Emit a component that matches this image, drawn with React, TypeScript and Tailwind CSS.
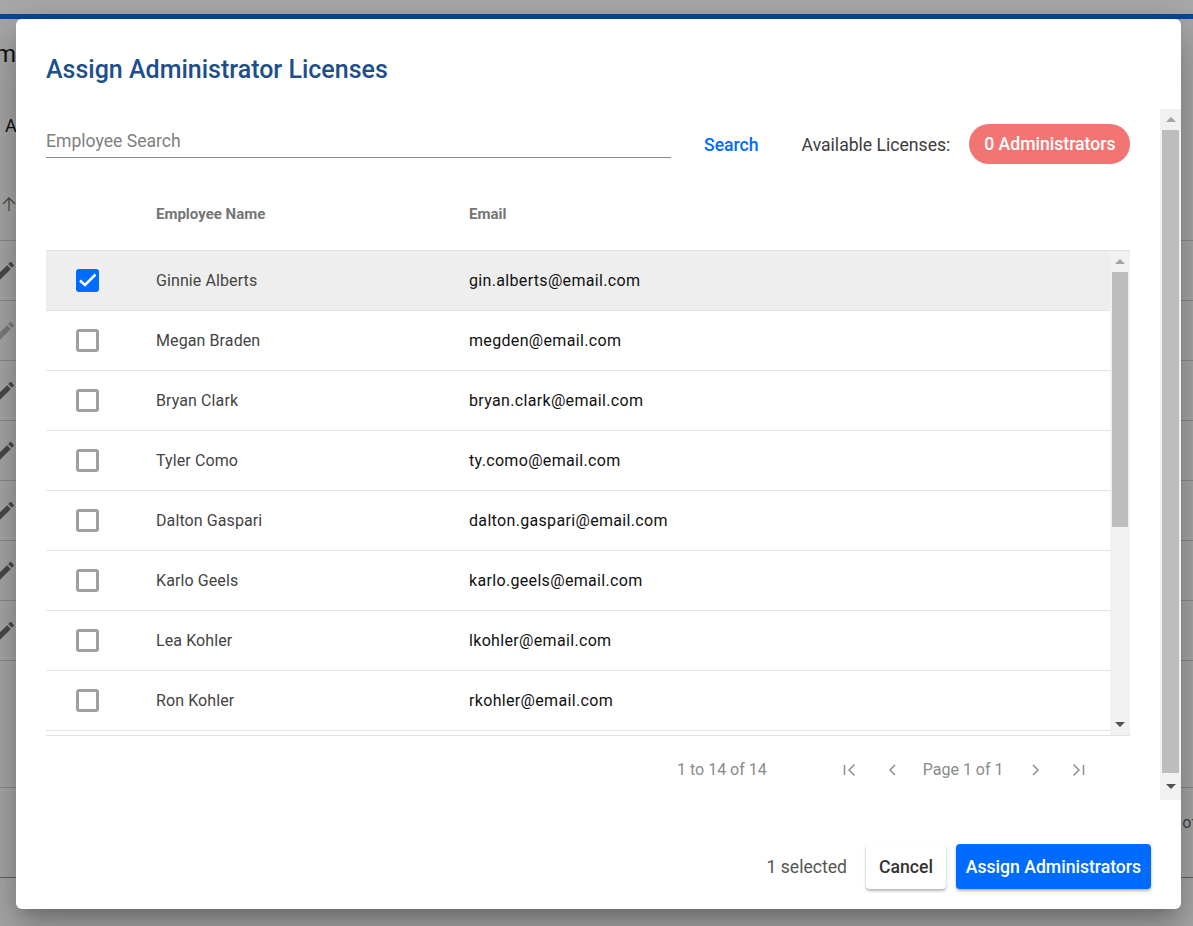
const employees = [
  { name: "Ginnie Alberts", email: "gin.alberts@email.com", checked: true },
  { name: "Megan Braden", email: "megden@email.com" },
  { name: "Bryan Clark", email: "bryan.clark@email.com" },
  { name: "Tyler Como", email: "ty.como@email.com" },
  { name: "Dalton Gaspari", email: "dalton.gaspari@email.com" },
  { name: "Karlo Geels", email: "karlo.geels@email.com" },
  { name: "Lea Kohler", email: "lkohler@email.com" },
  { name: "Ron Kohler", email: "rkohler@email.com" },
];

function Pencil({ faded }: { faded?: boolean }) {
  return (
    <svg viewBox="0 0 24 24" className={`ml-[-7px] h-6 w-6 ${faded ? "fill-[#7d7d7d]" : "fill-[#4a4a4a]"}`}>
      <path d="M3 17.25V21h3.75L17.81 9.94l-3.75-3.75L3 17.25zM20.71 7.04c.39-.39.39-1.02 0-1.41l-2.34-2.34c-.39-.39-1.02-.39-1.41 0l-1.83 1.83 3.75 3.75 1.83-1.83z" />
    </svg>
  );
}

function Checkbox({ checked }: { checked?: boolean }) {
  if (checked) {
    return (
      <div className="flex h-[23px] w-[23px] items-center justify-center rounded-[3px] bg-[#006cff]">
        <svg viewBox="0 0 23 23" className="h-[23px] w-[23px] fill-none stroke-white stroke-[2.5]">
          <path d="M4 11.5l5 4.5L19.5 5.5" />
        </svg>
      </div>
    );
  }
  return <div className="h-[23px] w-[23px] rounded-[3px] border-[3px] border-[#a0a0a0] bg-white" />;
}

function ScrollArrow({ down, dark }: { down?: boolean; dark?: boolean }) {
  return (
    <svg viewBox="0 0 10 5" className={`h-[5px] w-[10px] ${dark ? "fill-[#505050]" : "fill-[#a3a3a3]"}`}>
      <path d={down ? "M0 0h10L5 5z" : "M0 5h10L5 0z"} />
    </svg>
  );
}

function PageIcon({ d }: { d: string }) {
  return (
    <svg viewBox="0 0 16 16" className="h-4 w-4 fill-none stroke-[#8f8f8f] stroke-[1.5]">
      <path d={d} />
    </svg>
  );
}

export default function App() {
  return (
    <div className="relative h-[926px] w-[1193px] overflow-hidden bg-[#a8a8a8] font-['Roboto',sans-serif]">
      {/* page behind the dialog */}
      <div className="flex h-full flex-col">
        <div className="h-[14px] shrink-0" />
        <div className="h-[5px] shrink-0 bg-[#0047a0]" />
        <div className="h-[222px] shrink-0 border-b border-[#8c8c8c]">
          <div className="ml-[-5px] mt-[19px] text-[24px] leading-8 text-[#111]">m</div>
          <div className="ml-[5px] mt-[44px] text-[18px] leading-6 text-[#111]">A</div>
          <svg viewBox="0 0 16 16" className="ml-[1px] mt-[58px] h-4 w-4 fill-none stroke-[#4f4f3f] stroke-[1.3]">
            <path d="M8 15V2M2 8l6-6 6 6" />
          </svg>
        </div>
        {[0, 1, 2, 3, 4, 5, 6].map((i) => (
          <div key={i} className="flex h-[60px] shrink-0 items-center border-b border-[#8c8c8c]">
            <Pencil faded={i === 1} />
          </div>
        ))}
        <div className="h-[127px] shrink-0 border-b border-[#8c8c8c]" />
        <div className="flex h-[90px] shrink-0 items-start justify-end border-b border-[#666] pt-[25px]">
          <span className="mr-[-4px] text-[16px] leading-5 text-[#444]">of</span>
        </div>
      </div>

      {/* dialog */}
      <div className="absolute left-4 top-[19px] flex h-[890px] w-[1165px] flex-col rounded-[6px] bg-white shadow-[0_11px_15px_-7px_rgba(0,0,0,0.2),0_24px_38px_3px_rgba(0,0,0,0.14),0_9px_46px_8px_rgba(0,0,0,0.12)]">
        <div className="h-[90px] shrink-0 pl-[30px] pt-[33px] text-[25px] font-medium leading-[36px] text-[#1c4f8b]">
          Assign Administrator Licenses
        </div>

        <div className="flex h-[691px] shrink-0">
          <div className="w-[1144px] shrink-0 pl-[30px] pr-[30px]">
            {/* search row */}
            <div className="flex h-[62px] items-center whitespace-nowrap pt-[8px] text-[17.6px]">
              <div className="mt-[-7px] flex h-[34px] w-[625px] shrink-0 items-center border-b border-[#8c8c8c] text-[#808080]">
                <span className="mt-[3px]">Employee Search</span>
              </div>
              <span className="ml-[33px] mt-[2px] font-medium text-[#006cff]">Search</span>
              <span className="ml-[43px] mt-[2px] text-[#3c3c3c]">Available Licenses:</span>
              <span className="ml-[19px] flex h-10 w-[161px] shrink-0 items-center justify-center rounded-full bg-[#f27573] pt-[1px] font-medium text-white">
                0 Administrators
              </span>
            </div>

            {/* grid */}
            <div className="flex h-[80px] items-center border-b border-[#e2e2e2] pt-[8px] text-[15px] font-bold text-[#757575]">
              <span className="ml-[110px] w-[313px]">Employee Name</span>
              <span>Email</span>
            </div>
            <div className="flex h-[485px] border-b border-[#e2e2e2]">
              <div className="w-[1064px] overflow-hidden">
                {employees.map((e) => (
                  <div
                    key={e.email}
                    className={`flex h-[60px] items-center border-b border-[#e2e2e2] text-[16px] ${e.checked ? "bg-[#eeeeee]" : "bg-white"}`}
                  >
                    <div className="flex w-[110px] shrink-0 pl-[30px]">
                      <Checkbox checked={e.checked} />
                    </div>
                    <span className="w-[313px] shrink-0 tracking-[0.1px] text-[#444]">{e.name}</span>
                    <span className="tracking-[0.33px] text-[#111]">{e.email}</span>
                  </div>
                ))}
              </div>
              <div className="flex w-5 shrink-0 flex-col items-center bg-[#f1f1f1]">
                <div className="flex h-[21px] shrink-0 items-center justify-center">
                  <ScrollArrow />
                </div>
                <div className="h-[255px] w-4 shrink-0 bg-[#bdbdbd]" />
                <div className="flex-1" />
                <div className="flex h-[21px] shrink-0 items-center justify-center">
                  <ScrollArrow down dark />
                </div>
              </div>
            </div>

            {/* pagination */}
            <div className="flex h-[64px] items-center pt-[4px] text-[16px] text-[#8a8a8a]">
              <span className="ml-[631px]">1 to 14 of 14</span>
              <div className="ml-[75px]">
                <PageIcon d="M2.5 3v10M12.5 2.5L7 8l5.5 5.5" />
              </div>
              <div className="ml-[26px]">
                <PageIcon d="M11 3L6 8l5 5" />
              </div>
              <span className="ml-[23px]">Page 1 of 1</span>
              <div className="ml-[24px]">
                <PageIcon d="M5 3l5 5-5 5" />
              </div>
              <div className="ml-[26px]">
                <PageIcon d="M3.5 2.5L9 8l-5.5 5.5M13.5 3v10" />
              </div>
            </div>
          </div>

          {/* dialog scrollbar */}
          <div className="flex w-[21px] shrink-0 flex-col items-center bg-[#f1f1f1]">
            <div className="flex h-[21px] shrink-0 items-center justify-center">
              <ScrollArrow />
            </div>
            <div className="h-[643px] w-[17px] shrink-0 bg-[#bdbdbd]" />
            <div className="flex flex-1 items-center justify-center">
              <ScrollArrow down dark />
            </div>
          </div>
        </div>

        {/* footer */}
        <div className="flex flex-1 items-start justify-end pr-[30px] pt-[44px] text-[17.6px]">
          <span className="mr-[19px] flex h-[45px] items-center pt-[2px] text-[#555]">1 selected</span>
          <button className="h-[45px] w-[80px] rounded bg-white pt-[2px] font-medium text-[#333] shadow-[0_2px_3px_rgba(0,0,0,0.3)]">
            Cancel
          </button>
          <button className="ml-[10px] h-[45px] w-[195px] rounded bg-[#006cff] pt-[2px] font-medium text-white shadow-[0_2px_3px_rgba(0,0,0,0.3)]">
            Assign Administrators
          </button>
        </div>
      </div>
    </div>
  );
}
